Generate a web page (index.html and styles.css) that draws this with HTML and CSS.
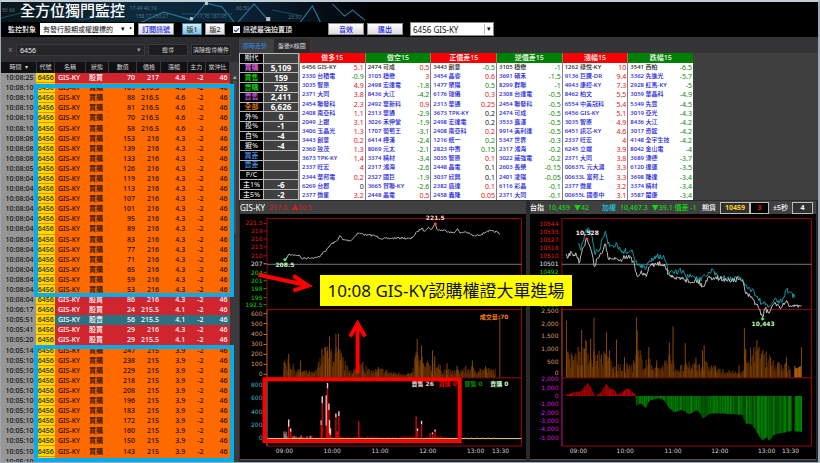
FILE: index.html
```html
<!DOCTYPE html>
<html lang="zh-Hant">
<head>
<meta charset="utf-8">
<title>全方位獨門監控</title>
<link rel="stylesheet" href="styles.css">
</head>
<body>
<div class="app">
  <header class="top">
    <svg class="banner" viewBox="0 0 366 20" preserveAspectRatio="xMinYMin slice" aria-hidden="true">
      <defs>
        <linearGradient id="sky"><stop offset="0" stop-color="#0b1418"/><stop offset=".35" stop-color="#0d2a3c"/><stop offset=".65" stop-color="#0a2236"/><stop offset="1" stop-color="#020405"/></linearGradient>
      </defs>
      <rect width="366" height="20" fill="url(#sky)"/>
      <g fill="#5d7888" font-size="5"><text x="1" y="10">50 66</text><text x="128" y="8">17.49 40.19</text><text x="134" y="16">158.17 150.27</text><text x="195" y="16">17.76 187.05</text><text x="234" y="8">60.50</text><text x="286" y="17">25.50</text></g>
      <g fill="none" stroke="#2f7fa5" stroke-width="1"><path d="M140 20L162 10 190 18 204 1 220 5 232 20M236 20L252 2 266 18M298 20L310 4 318 20M330 2L342 14 350 8 362 18"/></g>
      <g fill="none" stroke="#1d4d68" stroke-width="1"><path d="M0 16L40 6 80 18 120 8M180 12H230M270 8L300 14"/></g>
      <g fill="#b9c4bd"><rect x="188" y="15" width="3" height="3"/><rect x="203" y="0" width="3" height="3"/><rect x="264" y="15" width="4" height="4"/></g>
    </svg>
    <h1 class="title">全方位獨門監控</h1>
    <div class="toolbar">
      <label class="lbl" for="target">監控對象</label>
      <span class="pick pick-target">
        <select id="target"><option>有發行股期或權證標的</option></select>
        <span class="marks" aria-hidden="true"><i>▾</i><i>•</i></span>
      </span>
      <button class="btn">訂閱訊號</button>
      <span class="pair"><button class="btn ver on">版1</button><button class="btn ver">版2</button></span>
      <label class="check"><input type="checkbox" checked>訊號最強迫置頂</label>
      <span class="pair actions"><button class="btn">音效</button><button class="btn">匯出</button></span>
      <span class="pick pick-stock">
        <select aria-label="股票"><option>6456 GIS-KY</option></select>
        <span class="marks" aria-hidden="true"><i>▾</i></span>
      </span>
    </div>
  </header>

  <div class="main">
    <aside class="side">
      <form class="search">
        <span class="close">×</span>
        <span class="field"><input class="query" type="text" value="6456" aria-label="搜尋代號"><i aria-hidden="true">▾</i></span>
        <button class="dark" type="button">搜尋</button>
        <button class="dark" type="button">清除搜尋條件</button>
      </form>
      <div class="feed">
        <table class="signals">
          <colgroup><col class="c-time"><col class="c-code"><col class="c-name"><col class="c-kind"><col class="c-num"><col class="c-price"><col class="c-chg"><col class="c-main"><col class="c-day"></colgroup>
          <thead><tr><th>時間 &nbsp;<i>▾</i></th><th>代號</th><th>名稱</th><th>狀態</th><th>數值</th><th>價格</th><th>漲幅</th><th>主力</th><th>當沖比</th></tr></thead>
          <tbody id="signals"></tbody>
        </table>
        <div class="rail"><span>▴</span><b></b></div>
        <div class="mark mark-a"></div>
        <div class="mark mark-b"></div>
      </div>
    </aside>

    <section class="work">
      <nav class="tabs"><button class="tab on">即時走勢</button><button class="tab">盤後K線圖</button></nav>
      <div class="boards">
        <table class="stats"><tbody id="stats"></tbody></table>
        <div class="ranks" id="ranks"></div>
      </div>
      <div class="charts">
        <section class="chart">
          <div class="head"><span class="name">GIS-KY</span><span class="up">217.5</span><span class="up">▲10.5</span></div>
          <svg id="stock" class="plot" viewBox="240 213 286 246" role="img" aria-label="GIS-KY"></svg>
        </section>
        <section class="chart">
          <div class="head quote">
            <span>台指</span><span class="down">10,459</span><span class="down wide">▼42</span>
            <span class="cyan">加權</span><span class="down">10,467.3</span><span class="down">▼39.1 價差 -1</span>
            <label class="fut" for="sec">期貨</label><span class="boxes"><b class="box gold">10459</b><b class="box red">3</b></span>
            <label for="sec">±5秒</label><input id="sec" class="box sec" type="text" value="4">
          </div>
          <svg id="index" class="plot" viewBox="530 213 286 246" role="img" aria-label="台指"></svg>
        </section>
        <p class="callout">10:08 GIS-KY認購權證大單進場</p>
      </div>
    </section>
  </div>
</div>
<script src="app.js"></script>
</body>
</html>
```
FILE: styles.css
```css
* { box-sizing: border-box; }
body { margin: 0; background: #2d2d2f; color: #fff; font: 7px/9px "Noto Sans", "Noto Sans CJK TC", sans-serif; }
button, input, select { font: inherit; margin: 0; padding: 0; border: 0; border-radius: 0; min-width: 0; }
table { border-collapse: collapse; }
th, td { padding: 0; }
i { font-style: normal; }
.app { height: 100vh; display: flex; flex-direction: column; overflow: hidden; border: solid #9aa9b4; border-width: 2px 2px 1px 1px; border-top-color: #c3ced6; }

.top { position: relative; background: #000; display: flex; flex-direction: column; }
.banner { position: absolute; left: 0; top: 0; width: 45%; height: 20px; }
.title { position: relative; margin: 0; padding-left: 19px; height: 19px; font-size: 15px; line-height: 16px; font-weight: 500; }
.toolbar { position: relative; display: flex; align-items: center; height: 16px; padding-left: 7px; }
.lbl { width: 32px; font-weight: 500; }
.pick { position: relative; display: flex; background: #fff; color: #000; }
.pick select { appearance: none; width: 100%; background: none; color: #111; }
.marks { position: absolute; right: 2px; top: 1px; display: flex; gap: 4px; pointer-events: none; line-height: 10px; }
.pick-target { width: 94px; height: 12px; margin-right: 4px; }
.pick-target select { padding-left: 3px; }
.btn { height: 12px; width: 36px; background: linear-gradient(#fff, #dcdce0); border: 1px solid #8f8f94; color: #1414e6; font-weight: 500; }
.pair { display: flex; gap: 3px; margin-left: 8px; }
.ver { width: 20px; color: #333; }
.ver.on { background: linear-gradient(#d2effb, #7cc4e8); border-color: #2f7fae; }
.check { display: flex; align-items: center; gap: 3px; margin-left: 8px; font-weight: 500; }
.check input { appearance: none; display: grid; place-items: center; width: 7px; height: 7px; background: #f4f4f6; }
.check input:checked::after { content: ""; width: 2px; height: 4px; border: solid #1c3f8c; border-width: 0 1px 1px 0; transform: rotate(45deg); }
.actions { margin-left: 36px; }
.pick-stock { width: 84px; height: 14px; margin-left: 7px; border: 1px solid #888; }
.pick-stock select { padding-left: 2px; font-size: 8px; }
.pick-stock .marks { border-left: 1px solid #bbb; padding-left: 2px; }

.main { flex: 1; min-height: 0; display: grid; grid-template-columns: 238fr 579fr; }
.side { display: flex; flex-direction: column; min-width: 0; min-height: 0; background: #2d2d2f; }
.search { display: flex; gap: 3px; padding: 7px 8px 6px 7px; color: #ddd; }
.close { width: 5px; line-height: 12px; color: #888; font-size: 8px; }
.field { flex: 1; display: flex; height: 12px; padding: 0 3px; background: #262628; border: 1px solid #3a3a3c; color: #999; }
.query { flex: 1; width: 100%; background: none; color: #eee; }
.dark { width: 40px; height: 12px; background: #1d1d1f; border: 1px solid #38383a; color: #ddd; white-space: nowrap; font-size: 6px; }
.feed { position: relative; flex: 1; min-height: 0; display: grid; grid-template-columns: minmax(0, 1fr) 9px; overflow: hidden; }
.signals { table-layout: fixed; width: 100%; height: 101%; font-weight: 500; }
.signals th { height: 11px; background: #111113; border-right: 1px solid #3a3a3c; color: #d8d8d8; font-weight: 400; font-size: 6px; white-space: nowrap; line-height: 9px; }
.signals td { line-height: 9px; text-align: right; padding-right: 2px; white-space: nowrap; border-bottom: 1px solid transparent; }
.c-time { width: 15.5%; } .c-code { width: 8%; } .c-name { width: 13.5%; } .c-kind { width: 10%; } .c-num { width: 12.5%; }
.c-price { width: 10.5%; } .c-chg { width: 11.5%; } .c-main { width: 8%; } .c-day { width: 10.5%; }
.signals .time { background: #969696; color: #111; padding-right: 3px; }
.signals .code { background: #ffd800; color: #222; border-bottom: 1px solid #f08a00; padding-right: 1px; }
.signals .mid { text-align: center; }
.warrant { background: #ff6a00; color: #1c0d00; }
.buy { background: #d0242e; }
.sell { background: #2d7180; }
.rail { background: #3a3a3c; text-align: center; color: #aaa; padding-top: 10px; }
.rail b { display: block; width: 3px; height: 153px; margin: 0 auto; background: #4c4c4e; }
.mark { position: absolute; left: 33px; right: 5px; border: 4px solid #00adef; }
.mark-a { top: 22px; height: 213px; }
.mark-b { top: 283px; bottom: 0; }

.work { display: flex; flex-direction: column; min-width: 0; min-height: 0; background: #404040; }
.tabs { display: flex; height: 16px; padding-top: 2px; background: #353537; }
.tab { background: #2b2b2d; color: #ddd; padding: 0 4px; font-size: 6px; }
.tab.on { background: #404040; color: #2e8ae0; padding-right: 7px; }
.boards { display: flex; height: 147px; }
.stats { width: 60px; table-layout: fixed; }
.stats td, .stats th { height: 9px; line-height: 8px; border: 1px solid #b8b8b8; text-align: center; }
.stats th { width: 24px; background: #000; font-weight: 500; font-size: 7px; }
.stats td { font-size: 8px; font-weight: 700; }
.stats .plain { color: #ddd; } .stats .pink { color: #f070f0; } .stats .lime { color: #12e612; }
.stats .violet { color: #d060e8; } .stats .orange { color: #ff8c1a; } .stats .blue { color: #4f8fe8; }
.ranks { flex: 0 1 394px; display: grid; grid-template-columns: repeat(6, minmax(0, 1fr)); gap: 1px; background: #808080; padding-left: 1px; }
.rank { width: 100%; table-layout: fixed; background: #fff; font-size: 6px; font-weight: 500; color: #1717d8; }
.rank th { height: 10px; line-height: 10px; font-size: 7px; font-weight: 500; color: #fff; }
.rank td { height: 9px; line-height: 9px; padding-left: 2px; overflow: hidden; white-space: nowrap; }
.rank td:last-child { width: 32%; padding: 0 1px 0 0; text-align: right; font-size: 7px; font-weight: 400; }
.rank tbody tr:first-child { color: #222; }
.rank .hot { background: #f80000; } .rank .cold { background: #008000; }
.rank .r { color: #f01010; } .rank .g { color: #0a8a0a; } .rank .k { color: #222; }

.charts { position: relative; flex: 1; min-height: 0; display: grid; grid-template-columns: 1fr 1fr; gap: 4px; padding: 1px 2px 2px 1px; background: #2a2a2c; }
.chart { display: flex; flex-direction: column; min-width: 0; min-height: 0; background: #404040; border: 0 solid #555; border-bottom-width: 1px; }
.head { display: flex; align-items: center; gap: 4px; height: 13px; white-space: nowrap; }
.name { font-size: 8px; }
.up { color: #e01818; }
.down { color: #10d810; }
.cyan { color: #18c8d8; }
.wide { margin-right: 9px; }
.fut { margin-left: auto; }
.quote { gap: 4px; padding-right: 3px; font-weight: 500; }
.boxes { display: flex; }
.box { height: 12px; line-height: 10px; border: 1px solid #bbb; text-align: center; background: #303030; }
.gold { width: 30px; color: #ffd020; }
.red { width: 19px; color: #e01010; background: #000; }
.sec { width: 21px; color: #fff; font-weight: 700; }
.plot { display: block; flex: 1; min-height: 0; width: 100%; background: #000; font: 6px "DejaVu Sans", "Noto Sans CJK TC", sans-serif; }
.callout { position: absolute; left: 14%; top: 75px; width: 252px; margin: 0; background: #ff0; color: #111; text-align: center; font-size: 17px; line-height: 31px; white-space: nowrap; }
```
FILE: app.js
```js
const byId = id => document.getElementById(id);

/* signal feed: time|value|price|change|kind */
const feed = `10:08:25|70|217|4.8|b
10:08:10|109|216.5|4.6|w
10:08:10|88|216.5|4.6|w
10:08:10|81|216.5|4.6|w
10:08:10|70|216.5|4.6|w
10:08:10|58|216.5|4.6|w
10:08:08|153|216|4.3|w
10:08:08|139|216|4.3|w
10:08:08|133|216|4.3|w
10:08:05|126|216|4.3|w
10:08:04|119|216|4.3|w
10:08:04|113|216|4.3|w
10:08:04|107|216|4.3|w
10:08:04|101|216|4.3|w
10:08:04|95|216|4.3|w
10:08:04|89|216|4.3|w
10:08:04|83|216|4.3|w
10:08:04|77|216|4.3|w
10:08:04|71|216|4.3|w
10:08:04|65|216|4.3|w
10:08:04|59|216|4.3|w
10:08:04|53|216|4.3|w
10:08:04|86|216|4.3|b
10:06:17|24|215.5|4.1|b
10:05:51|56|215.5|4.1|s
10:05:41|29|216|4.3|b
10:05:20|29|215.5|4.1|b
10:05:14|247|215|3.9|w
10:05:10|238|215|3.9|w
10:05:10|229|215|3.9|w
10:05:10|218|215|3.9|w
10:05:10|208|215|3.9|w
10:05:10|196|215|3.9|w
10:05:10|183|215|3.9|w
10:05:10|172|215|3.9|w
10:05:10|160|215|3.9|w
10:05:10|150|215|3.9|w
10:05:10|143|215|3.9|w
10:05:10|137|215|3.9|w`;
const kinds = { b: ['buy', '股買'], s: ['sell', '股賣'], w: ['warrant', '買購'] };
byId('signals').innerHTML = feed.split('\n').map(line => {
  const [time, num, price, chg, k] = line.split('|');
  return `<tr class="${kinds[k][0]}"><td class="time">${time}</td><td class="code">6456</td><td class="mid">GIS-KY</td><td class="mid">${kinds[k][1]}</td><td>${num}</td><td>${price}</td><td>${chg}</td><td>-2</td><td>46</td></tr>`;
}).join('');

const stats = [['期代', '', 'plain'], ['買購', '5,109', 'pink'], ['買售', '159', 'lime'], ['賣購', '735', 'lime'], ['賣售', '2,411', 'violet'],
  ['全部', '6,626', 'orange'], ['外%', '0', 'plain'], ['投%', '-1', 'plain'], ['自%', '-4', 'plain'], ['避%', '-4', 'plain'],
  ['買差', '', 'blue'], ['賣差', '', 'blue'], ['P/C', '', 'plain'], ['主1%', '-6', 'plain'], ['主5%', '-2', 'plain']];
byId('stats').innerHTML = stats.map(([n, v, c]) => `<tr><th class="${c}">${n}</th><td>${v}</td></tr>`).join('');

/* rankings: a trailing letter overrides the sign colour */
const ranks = [
  ['做多15', 'hot', '6456 GIS-KY:5.1,2330 台積電:-0.9,3035 智原:4.9,2371 大同:3.8,2454 聯發科:2.3,2408 南亞科:1.1,2049 上銀:3.1,3406 玉晶光:1.3,3443 創意:0.2,2360 致茂:1.3,3673 TPK-KY:1.4,2337 旺宏:4,2344 華邦電:0.2,6269 台郡:0:k,2377 微星:3.2'],
  ['做空15', 'cold', '2474 可成:0.5,3105 穩懋:3,2498 宏達電:-1.8,8436 大江:-4.2,2492 華新科:0.9,2313 華通:-2.9,3026 禾伸堂:-1.9,1707 葡萄王:-3.1,6414 樺漢:-2.4,8069 元太:-2.1,3374 精材:-3.4,2317 鴻海:-2.6,2327 國巨:-1.9,3665 貿聯-KY:-2.6,2448 晶電:0.5'],
  ['正價差15', 'hot', '3443 創意:-0.5,3454 晶睿:0.6,1477 聚陽:0.5:g,6176 瑞儀:0.3,2313 華通:0.25,3673 TPK-KY:0.2:k,2498 宏達電:0.2:k,2408 南亞科:0.2,1216 統一:0.2:g,2823 中壽:0.15:g,3035 智原:0.1,2448 晶電:0.1:k,3037 欣興:0.1:k,2382 廣達:0.1,2458 義隆:0.05'],
  ['逆價差15', 'cold', '3105 穩懋:-1,3691 碩禾:-1.5,8299 群聯:-1,2308 台達電:-0.5,2454 聯發科:-0.5,2474 可成:-0.5,3533 嘉澤:-0.5,9914 美利達:-0.5,5347 世界:-0.3,2317 鴻海:-0.2,3022 威強電:-0.2,2603 長榮:-0.15,2401 凌陽:-0.05,6116 彩晶:-0.1,2371 大同:-0.1'],
  ['漲幅15', 'hot', '1262 綠悅-KY:10,9136 巨騰-DR:9.4,4943 康控-KY:7.3,8462 柏文:5.5,6554 中美冠科:5.4,6456 GIS-KY:5.1,3035 智原:4.9,6451 訊芯-KY:4.6,2337 旺宏:4,6245 立端:3.9,2371 大同:3.8,00637L 元大滬:3.3,00633L 富邦上:3.3,2377 微星:3.2,00655L 國泰中:3.1'],
  ['跌幅15', 'cold', '3541 西柏:-6.5,3362 先進光:-5.7,2928 紅馬-KY:-5,3059 華晶科:-4.9,5349 先豐:-4.5,3019 亞光:-4.3,8436 大江:-4.2,3017 奇鋐:-4.2,4148 全宇生技:-4.2,8042 金山電:-4,3689 湧德:-3.7,6120 達運:-3.5,3698 隆達:-3.4,3374 精材:-3.4,3587 閎康:-3.4']
];
byId('ranks').innerHTML = ranks.map(([title, cls, rows]) =>
  `<table class="rank"><colgroup><col><col style="width:32%"></colgroup><thead><tr><th class="${cls}" colspan="2">${title}</th></tr></thead><tbody>` +
  rows.split(',').map(r => {
    const [name, v, c] = r.split(':');
    return `<tr><td>${name}</td><td class="${c || (v < 0 ? 'g' : 'r')}">${v}</td></tr>`;
  }).join('') + '</tbody></table>').join('');

/* chart helpers; data is stored at three units per plot unit */
let seed = 7;
const rnd = () => (seed = (seed * 16807) % 2147483647) / 2147483647;
const pairs = s => s.trim().split(/\s+/).map(p => p.split(',').map(Number));
const at = (pts, x) => {
  if (x <= pts[0][0]) return pts[0][1];
  for (let i = 1; i < pts.length; i++) if (x <= pts[i][0]) {
    const [a, b] = pts[i - 1], [c, d] = pts[i];
    return b + (d - b) * (x - a) / (c - a);
  }
  return pts[pts.length - 1][1];
};
const line = (s, ox, oy, noise, color) => {
  const pts = pairs(s), keys = pts.map(p => p[0]), out = [];
  for (let x = keys[0]; x <= keys[keys.length - 1]; x += 2.5) {
    const near = keys.some(k => Math.abs(k - x) < 1.3);
    out.push([x, at(pts, x) + (near ? 0 : (rnd() - .5) * noise)]);
  }
  return `<polyline fill="none" stroke="${color}" stroke-width=".9" points="${out.map(([x, y]) => (ox + x / 3).toFixed(1) + ',' + (oy + y / 3).toFixed(1)).join(' ')}"/>`;
};
const bar = (x, y1, y2, color, w = .9) => `<path d="M${x.toFixed(1)} ${y1.toFixed(1)}V${y2.toFixed(1)}" stroke="${color}" stroke-width="${w}"/>`;
const text = (x, y, t, color, anchor = 'end', weight = 400) => `<text x="${x}" y="${y + 2}" fill="${color}" text-anchor="${anchor}" font-weight="${weight}">${t}</text>`;
const axis = (x, tick, items, color) => items.map(([t, y]) => text(x, y, t, color) + `<path d="M${tick - 3} ${y}h3" stroke="${color}" stroke-width=".8"/>`).join('');
const volume = (env, peaks, x0, x1, ox, base) => {
  const e = pairs(env);
  let s = '';
  for (let x = x0; x <= x1; x += 2.4) {
    const h = at(e, x) * (.35 + rnd() * .9);
    s += bar(ox + x / 3, base - h / 3, base, rnd() > .5 ? '#7a3f04' : '#5c2e02');
  }
  pairs(peaks).forEach(([x, y]) => { s += bar(ox + x / 3, 320 + y / 3, base, '#8a4706', 1); });
  return s;
};
const frame = (l, r, v, sub) => `<g fill="none" stroke="#9c0808" stroke-width="1"><path d="M${l} 217.5H${r}V446H${l}ZM${l} 309H${r}M${l} 377.5H${r}"/></g>` +
  `<path d="M${l} 309V377" stroke="${v}"/><path d="M${l} 378V446" stroke="${sub}"/><path d="M${l} 263.5H${r}" stroke="#999" stroke-width=".8"/>`;
const times = xs => ['09:00', '10:00', '11:00', '12:00', '13:00', '13:30'].map((t, i) => text(xs[i], 451, t, '#d0d0d0', 'middle')).join('');

let s = frame(266.5, 522, '#8a5020', '#2a8f8f');
s += axis(262, 266, [['221.5', 222.5], ['219', 230], ['216', 238], ['213', 246], ['210', 255]], '#e01818');
s += axis(262, 266, [['207', 263]], '#e0e0e0');
s += axis(262, 266, [['204', 272], ['201', 280], ['198', 288], ['195', 297], ['192.5', 304]], '#10d010');
s += axis(262, 266, [['600', 313], ['500', 323], ['400', 334], ['300', 344], ['200', 354], ['100', 364], ['0', 374]], '#d89c66');
s += axis(262, 266, [['800', 385], ['600', 398], ['400', 412], ['200', 425], ['0', 438]], '#44b8c0');
s += line('148,184 155,168 175,168 190,170 195,179 250,175 262,158 270,155 285,135 300,128 312,110 320,123 345,125 365,102 390,108 415,110 440,120 470,118 500,117 525,120 545,98 558,87 565,97 577,84 585,93 598,75 605,93 630,95 655,103 665,88 672,103 690,98 715,112 745,103 755,96 785,99 793,106', 236, 198, 6, '#c8c8c8');
s += '<circle cx="284.5" cy="259" r="1.5" fill="#4f4"/><circle cx="435.5" cy="223" r="1.5" fill="#f44"/>';
s += text(435.5, 217.5, '221.5', '#ffd8d8', 'middle', 700) + text(284.5, 264, '208.5', '#c8ffc8', 'middle', 700);
s += volume('143,40 157,55 180,22 235,14 255,60 275,90 310,75 335,26 365,26 375,50 400,20 440,24 470,14 530,12 540,70 565,35 590,50 615,28 650,18 700,30 780,22',
  '143,125 157,100 193,120 257,85 268,80 274,90 280,48 299,40 307,40 313,120 380,125 427,140 541,95 544,55 557,75 559,110 590,90 597,108 634,128 664,136 710,120 750,138 793,-14', 143, 781, 236, 377);
s += '<path d="M267 438.5H522" stroke="#d8d880" stroke-width="1"/>';
for (let x = 143; x < 235; x += 3) s += bar(236 + x / 3, 438 - rnd() * (x < 170 ? 7 : 3), 438, rnd() > .4 ? '#e8b0b0' : '#c00');
for (let x = 255; x < 640; x += 5) s += bar(236 + x / 3, 438 - rnd() * 2, 438, '#c00');
for (let x = 690; x < 780; x += 17) s += bar(236 + x / 3, 437, 438.5, '#f33');
pairs('157,298,320 163,325,335 255,300,315 258,228,250 270,225,317 274,188,205 278,250,270 280,300,340 283,325,345 299,280,292 302,335,336 308,273,288 304,338,340 368,303,303 541,290,292 545,325,333 557,302,312 583,340,341 590,337,342 598,328,335')
  .forEach(([x, top, red]) => { s += bar(236 + x / 3, 320 + top / 3, 320 + red / 3, '#ffc8c8', 1.4) + bar(236 + x / 3, 320 + red / 3, 438, '#d80000', 1.4); });
s += text(509, 316, '成交量:70', '#f08010', 'end', 700);
s += text(434, 384, '賣售 26', '#ffd8d8', 'end', 700) + text(457, 384, '買購 0', '#e00000', 'end', 700) + text(483, 384, '買售 0', '#009000', 'end', 700) + text(509, 384, '賣購 0', '#c8ffc8', 'end', 700);
s += times([284, 332, 380, 428, 476, 501]);
/* annotations */
s += '<g fill="none" stroke="#f00" stroke-width="4"><rect x="264" y="379" width="196" height="62"/><path d="M258 274L307 284.500M293 275L308 285 293 290M357.500 373V324M350 336L357.500 323 365 336"/></g>';
byId('stock').innerHTML = s;

s = frame(561.5, 812, '#8a5020', '#8a108a');
s += ['10544', '10535', '10527', '10518', '10510'].map((t, i) => text(558, 223 + i * 8, t, '#e01818')).join('');
s += text(558, 263, '10501', '#e0e0e0') + ['10492', '10484', '10475', '10467', '10458'].map((t, i) => text(558, [271, 280, 288, 296, 304][i], t, '#10d010')).join('');
s += ['2,500', '2,000', '1,500', '1,000', '500', '0'].map((t, i) => text(558, [310, 323, 336, 349, 362, 373][i], t, '#d89c66')).join('');
s += ['2,000', '1,000', '0', '-1,000', '-2,000', '-3,000', '-4,000', '-5,000'].map((t, i) => text(558, [379, 388, 396, 404, 413, 421, 429, 438][i], t, '#d818d8')).join('');
s += volume('120,95 150,60 165,100 205,75 250,60 262,30 320,40 335,75 365,50 400,30 430,65 450,28 520,45 545,40 580,22 650,14 660,70 700,80 740,50 770,42 795,30',
  '120,0 137,105 155,80 166,28 175,85 193,55 203,-9 241,35 250,90 271,57 295,110 331,-10 333,30 368,80 392,120 430,65 441,18 478,68 510,112 530,90 535,75 568,135 640,135 656,22 660,85 694,58 707,100 735,110 760,125 783,110 828,80', 120, 796, 526, 377);
for (let x = 808; x <= 826; x += 2.4) s += bar(526 + x / 3, 377 - 8 - rnd() * 4, 377, '#c06a10');
const flow = pairs('120,222 140,216 165,212 175,198 186,187 200,215 205,227 215,222 225,215 240,190 250,204 265,208 272,222 290,214 303,202 328,222 330,255 345,248 358,262 370,240 400,233 415,240 430,262 445,275 470,268 490,281 515,268 532,294 550,280 580,278 650,283 660,308 680,312 700,345 712,361 722,350 732,361 745,343 795,332 828,334');
for (let x = 120; x <= 828; x += 2.4) {
  if (x > 797 && x < 807) continue;
  const red = x < 330;
  s += bar(526 + x / 3, 320 + 227 / 3, 320 + (at(flow, x) + rnd() * 2) / 3, red ? (rnd() > .5 ? '#c80000' : '#8c0000') : (x > 806 || rnd() > .5 ? '#008a00' : '#005c00'), 1);
}
s += line('155,135 163,155 175,105 187,88 197,110 205,165 220,150 238,95 245,135 260,140 272,135 282,155 320,160 335,200 360,210 370,185 390,170 415,178 430,225 470,215 480,235 500,230 520,245 545,230 560,210 575,235 600,240 650,240 665,270 680,270 690,290 710,315 730,325 745,305 770,310 780,275 795,280 808,295', 526, 198, 18, '#18a8b0');
s += line('118,165 122,180 135,160 140,172 150,168 160,190 168,150 181,120 192,145 205,205 212,180 225,165 238,135 245,178 265,175 280,185 300,170 320,185 335,235 345,215 360,235 368,205 385,195 415,195 430,230 445,240 470,235 490,250 515,245 532,265 545,238 570,235 600,245 650,242 660,285 685,305 700,330 711,358 718,330 730,345 740,320 755,315 765,330 780,312 800,322 828,320', 526, 198, 16, '#d0d0d0');
s += '<circle cx="586.5" cy="238" r="1.5" fill="#f44"/><circle cx="763" cy="318.500" r="1.5" fill="#4f4"/>';
s += text(587, 232.5, '10,528', '#ffe8e8', 'middle', 700) + text(763.5, 323, '10,443', '#b8ffb8', 'middle', 700);
s += times([578, 625, 673, 720, 767, 791]);
byId('index').innerHTML = s;
```
